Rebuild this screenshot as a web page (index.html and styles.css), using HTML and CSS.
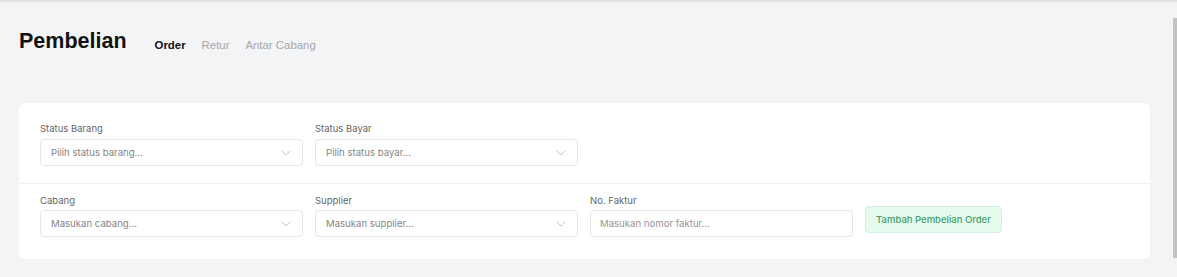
FILE: index.html
```html
<!DOCTYPE html>
<html lang="id">
<head>
  <meta charset="UTF-8" />
  <meta name="viewport" content="width=device-width, initial-scale=1.0"/>
  <title>Pembelian</title>
  <link rel="stylesheet" href="styles.css">
</head>
<body>
  <div class="app">
    <main class="content">
      <div class="page-header">
        <h1>Pembelian</h1>
        <nav class="tabs">
          <a href="#" class="tab active">Order</a>
          <a href="#" class="tab">Retur</a>
          <a href="#" class="tab">Antar Cabang</a>
        </nav>
      </div>

      <section class="filter-card">
        <div class="filter-row first">
          <div class="field">
            <label>Status Barang</label>
            <div class="select">
              <span>Pilih status barang...</span>
              <svg class="chevron" viewBox="0 0 10 6" width="10" height="6"><path d="M1 1l4 4 4-4" fill="none" stroke="currentColor" stroke-width="1" stroke-linecap="round" stroke-linejoin="round"/></svg>
            </div>
          </div>
          <div class="field">
            <label>Status Bayar</label>
            <div class="select">
              <span>Pilih status bayar...</span>
              <svg class="chevron" viewBox="0 0 10 6" width="10" height="6"><path d="M1 1l4 4 4-4" fill="none" stroke="currentColor" stroke-width="1" stroke-linecap="round" stroke-linejoin="round"/></svg>
            </div>
          </div>
        </div>

        <div class="filter-row second">
          <div class="field">
            <label>Cabang</label>
            <div class="select">
              <span>Masukan cabang...</span>
              <svg class="chevron" viewBox="0 0 10 6" width="10" height="6"><path d="M1 1l4 4 4-4" fill="none" stroke="currentColor" stroke-width="1" stroke-linecap="round" stroke-linejoin="round"/></svg>
            </div>
          </div>
          <div class="field">
            <label>Supplier</label>
            <div class="select">
              <span>Masukan supplier...</span>
              <svg class="chevron" viewBox="0 0 10 6" width="10" height="6"><path d="M1 1l4 4 4-4" fill="none" stroke="currentColor" stroke-width="1" stroke-linecap="round" stroke-linejoin="round"/></svg>
            </div>
          </div>
          <div class="field">
            <label for="faktur">No. Faktur</label>
            <input type="text" id="faktur" placeholder="Masukan nomor faktur...">
          </div>
          <button type="button" class="btn-add">Tambah Pembelian Order</button>
        </div>
      </section>
    </main>

    <div class="scrollbar"><div class="thumb"></div></div>
  </div>
</body>
</html>
```

FILE: styles.css
```css
:root {
  --bg: #f3f4f6;
  --white: #ffffff;
  --border: #e3e5e8;
  --text: #121212;
  --muted: #a6a6a6;
  --label: #666666;
  --placeholder: #858585;
  --green: #46a06a;
  --green-bg: #e6fbed;
  --green-border: #d2efdb;
}

* {
  box-sizing: border-box;
  margin: 0;
  padding: 0;
}

body {
  background-color: var(--bg);
  font-family: 'Inter', 'Liberation Sans', sans-serif;
  color: var(--text);
  height: 277px;
  overflow: hidden;
}

.app {
  display: flex;
  border-top: 2px solid #e2e2e2;
  height: 100%;
}

.content {
  flex: 1;
  padding: 0 20px 0 19px;
}

.page-header {
  display: flex;
  align-items: baseline;
  gap: 28px;
  padding-top: 27px;
  height: 101px;
}

h1 {
  font-family: 'Liberation Sans', Arial, sans-serif;
  font-size: 21.5px;
  font-weight: 700;
  color: var(--text);
}

.tabs {
  display: flex;
  gap: 16px;
  position: relative;
  top: 1px;
}

.tab {
  font-family: 'Liberation Sans', Arial, sans-serif;
  font-size: 11.4px;
  color: var(--muted);
  text-decoration: none;
}

.tab.active {
  color: var(--text);
  font-weight: 700;
}

.filter-card {
  background: var(--white);
  border-radius: 6px;
}

.filter-row {
  display: flex;
  align-items: flex-start;
  gap: 12px;
  padding: 0 21px;
}

.filter-row.first {
  padding-top: 19px;
  padding-bottom: 17px;
  border-bottom: 1px solid #eff0f2;
}

.filter-row.second {
  padding-top: 10px;
  padding-bottom: 22px;
}

.field {
  width: 263px;
  display: flex;
  flex-direction: column;
  gap: 4px;
}

.second .field {
  gap: 3px;
}

label {
  font-size: 9.5px;
  line-height: 13px;
  color: var(--label);
}

.select,
input {
  height: 27px;
  border: 1px solid var(--border);
  border-radius: 4px;
  background: var(--white);
  font-family: inherit;
  font-size: 9.6px;
  color: var(--placeholder);
}

.select {
  display: flex;
  align-items: center;
  justify-content: space-between;
  padding: 0 11px 0 10px;
}

.chevron {
  color: #c4c4c4;
}

input {
  width: 100%;
  padding: 0 9px;
  outline: none;
}

input::placeholder {
  color: #959595;
}

.btn-add {
  margin-top: 12px;
  width: 137px;
  height: 27px;
  background: var(--green-bg);
  border: 1px solid var(--green-border);
  border-radius: 4px;
  color: var(--green);
  font-family: inherit;
  font-size: 9.5px;
  font-weight: 500;
  cursor: pointer;
}

.scrollbar {
  width: 7px;
  padding: 16px 0 19px 3px;
}

.thumb {
  width: 4px;
  height: 100%;
  background: #c2c2c2;
}
```
